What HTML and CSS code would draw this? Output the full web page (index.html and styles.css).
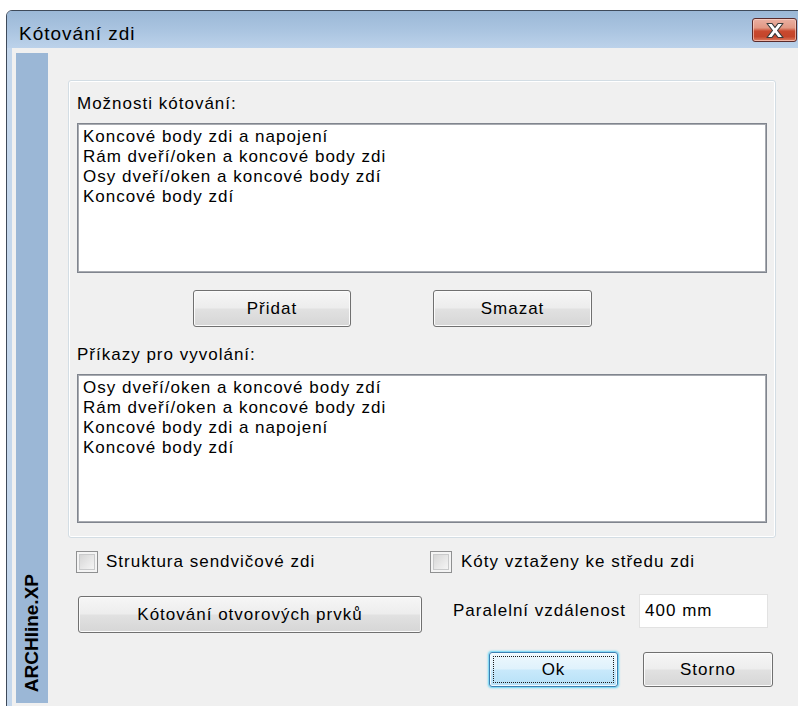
FILE: index.html
```html
<!DOCTYPE html>
<html lang="cs">
<head>
<meta charset="utf-8">
<title>Kótování zdi</title>
<link rel="stylesheet" href="styles.css">
</head>
<body>
<div class="window">
  <div class="titlebar">
    <span class="title">Kótování zdi</span>
    <div class="close" aria-label="Zavřít">
      <svg width="22" height="17" viewBox="0 0 22 17">
        <path d="M3 1.5 H8 L11 5.5 L14 1.5 H19 L13.5 8.5 L19 15.5 H14 L11 11.5 L8 15.5 H3 L8.5 8.5 Z" fill="#fff" stroke="#3b3b3b" stroke-width="1.2" stroke-linejoin="round"/>
      </svg>
    </div>
  </div>
  <div class="client">
    <div class="brand"><span>ARCHline.XP</span></div>
    <div class="main">
      <div class="group">
        <div class="label">Možnosti kótování:</div>
        <div class="listbox">
          <div>Koncové body zdi a napojení</div>
          <div>Rám dveří/oken a koncové body zdi</div>
          <div>Osy dveří/oken a koncové body zdí</div>
          <div>Koncové body zdí</div>
        </div>
        <div class="list-actions">
          <button class="btn btn-add">Přidat</button>
          <button class="btn btn-del">Smazat</button>
        </div>
        <div class="label label-second">Příkazy pro vyvolání:</div>
        <div class="listbox listbox-second">
          <div>Osy dveří/oken a koncové body zdí</div>
          <div>Rám dveří/oken a koncové body zdi</div>
          <div>Koncové body zdi a napojení</div>
          <div>Koncové body zdí</div>
        </div>
      </div>

      <div class="row row-checks">
        <label class="check cell-left"><span class="box"></span>Struktura sendvičové zdi</label>
        <label class="check check-right"><span class="box"></span>Kóty vztaženy ke středu zdi</label>
      </div>

      <div class="row row-tools">
        <div class="cell-left">
          <button class="btn btn-openings">Kótování otvorových prvků</button>
        </div>
        <div class="distance">
          <span class="distance-label">Paralelní vzdálenost</span>
          <div class="field">400 mm</div>
        </div>
      </div>

      <div class="row row-actions">
        <div class="cell-left"></div>
        <button class="btn btn-ok">Ok</button>
        <button class="btn btn-cancel">Storno</button>
      </div>
    </div>
  </div>
</div>
</body>
</html>
```

FILE: styles.css
```css
* {
  box-sizing: border-box;
}

html,
body {
  margin: 0;
  height: 100%;
  overflow: hidden;
  background: #ffffff;
}

body {
  font-family: "Liberation Sans", Arial, sans-serif;
  font-size: 17px;
  letter-spacing: 1px;
  color: #000;
}

/* window frame */
.window {
  margin: 10px 0 0 6px;
  width: 800px;
  height: 700px;
  border: 1px solid #3e4a5a;
  border-radius: 6px 6px 0 0;
  background: #c4d7ec;
  display: flex;
  flex-direction: column;
  overflow: hidden;
}

.titlebar {
  flex: none;
  height: 37px;
  display: flex;
  align-items: flex-start;
  padding: 0 8px 0 12px;
  background: linear-gradient(#9bb8d7, #abc5e1 55%, #bcd2ea);
}

.title {
  margin-top: 13px;
  font-size: 19px;
  line-height: 20px;
}

.close {
  margin-left: auto;
  margin-top: 7px;
  width: 45px;
  height: 24px;
  border: 1px solid #5a2b2b;
  border-radius: 3px;
  background: linear-gradient(#eab0a2 0%, #e29884 40%, #c9492f 55%, #c4452b 80%, #de7d62 100%);
  box-shadow: inset 0 0 0 1px rgba(255, 220, 210, 0.6);
  display: flex;
  align-items: center;
  justify-content: center;
}

.close svg {
  display: block;
}

/* client area */
.client {
  flex: 1;
  margin-left: 5px;
  background: #f0f0f0;
  display: flex;
  align-items: flex-start;
  padding: 5px 0 0 4px;
}

.brand {
  flex: none;
  width: 32px;
  height: 650px;
  background: #9bb7d6;
  display: flex;
  flex-direction: column;
  justify-content: flex-end;
  align-items: center;
  padding-bottom: 11px;
}

.brand span {
  writing-mode: vertical-rl;
  transform: rotate(180deg);
  font-weight: bold;
  font-size: 19px;
  letter-spacing: 0;
  line-height: 22px;
}

.main {
  margin-left: 20px;
  padding-top: 27px;
}

/* group box with the two lists */
.group {
  width: 708px;
  border: 1px solid #d3dde4;
  border-radius: 3px;
  box-shadow: inset 0 0 0 1px #ffffff;
  padding: 13px 8px 14px;
}

.label {
  line-height: 20px;
}

.label-second {
  margin-top: 18px;
}

.listbox {
  margin-top: 9px;
  height: 150px;
  background: #ffffff;
  border: 1px solid #80858e;
  box-shadow: inset 0 0 0 1px #a8abb1;
  padding: 3px 5px;
  line-height: 20px;
}

.listbox-second {
  height: 149px;
}

.list-actions {
  display: flex;
  gap: 82px;
  padding-left: 116px;
  margin-top: 17px;
}

/* push buttons */
.btn {
  position: relative;
  height: 37px;
  padding: 0;
  border: 1px solid #707070;
  border-radius: 3px;
  background: linear-gradient(#f6f6f6, #ededed 48%, #e1e1e1 52%, #d6d6d6);
  box-shadow: inset 0 0 0 1px #fbfbfb;
  font-family: "Liberation Sans", Arial, sans-serif;
  font-size: 17px;
  font-weight: normal;
  letter-spacing: 1px;
  line-height: 20px;
  color: #000;
  display: flex;
  align-items: center;
  justify-content: center;
}

.btn-add {
  width: 158px;
}

.btn-del {
  width: 159px;
}

.row {
  display: flex;
  align-items: flex-start;
  margin-left: 8px;
}

.cell-left {
  flex: none;
  width: 354px;
}

.row-checks {
  margin-top: 12px;
}

.check {
  display: flex;
  align-items: center;
  gap: 8px;
  height: 23px;
  line-height: 20px;
}

.check-right {
  gap: 9px;
}

.box {
  flex: none;
  width: 22px;
  height: 22px;
  border: 1px solid #8f9091;
  background: linear-gradient(135deg, #cfcfcf 0%, #e8e8e8 55%, #fbfbfb 100%);
  box-shadow: inset 0 0 0 2px #f4f4f4, inset 0 0 0 3px #c9cacb;
}

.row-tools {
  margin-top: 21px;
}

.btn-openings {
  margin: 2px 0 0 2px;
  width: 344px;
}

.distance {
  display: flex;
  align-items: center;
  gap: 13px;
  padding-left: 23px;
  height: 34px;
}

.field {
  width: 129px;
  height: 34px;
  background: #ffffff;
  border: 1px solid #e2e2e2;
  padding-left: 5px;
  line-height: 32px;
}

.row-actions {
  margin-top: 19px;
}

.btn-ok {
  margin-left: 59px;
  width: 129px;
  height: 35px;
  border-color: #3c7fb1;
  background: linear-gradient(#eef8fd, #dff2fc 48%, #c8e9fb 52%, #b6e0f7);
  box-shadow: inset 0 0 0 1px #f4fbff, 0 0 2px 1px #62d3f6;
}

/* focus rectangle inside the default button */
.btn-ok::after {
  content: "";
  position: absolute;
  inset: 3px;
  border: 1px dotted #1a1a1a;
  border-radius: 1px;
}

.btn-cancel {
  margin-left: 25px;
  width: 130px;
  height: 35px;
}
```
